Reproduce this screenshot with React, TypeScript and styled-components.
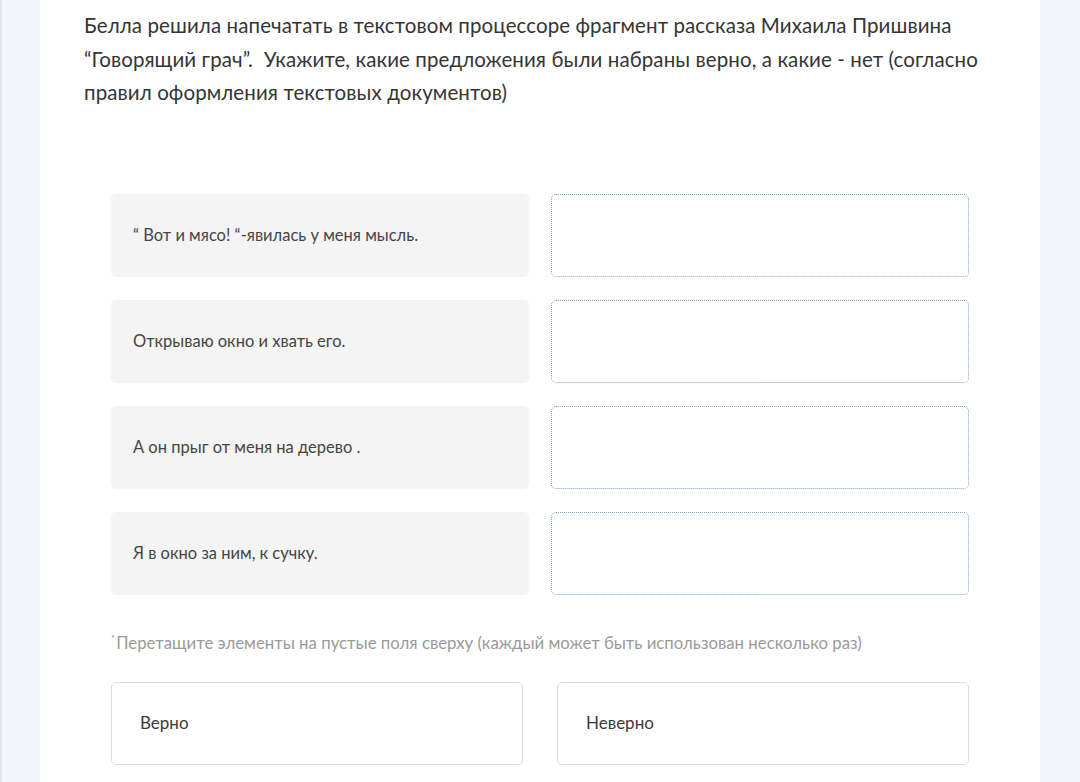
import React from "react";
import styled, { createGlobalStyle } from "styled-components";

const Global = createGlobalStyle`
  html, body { margin: 0; padding: 0; background: #f4f5fa; }
  body { font-family: Lato, "Noto Sans", sans-serif; }
  #root { min-height: 782px; }
`;

const Page = styled.div`
  display: flex;
  justify-content: center;
  height: 782px;
  overflow: hidden;
  background: #f4f5fa;
  border-left: 2px solid #e2e4ec;
  box-sizing: border-box;
`;

const Panel = styled.main`
  width: 1000px;
  margin-left: 38px;
  margin-right: 40px;
  background: #ffffff;
  box-sizing: border-box;
  padding: 9px 44px 0 44px;
`;

const Question = styled.p`
  margin: 0;
  font-size: 20.5px;
  line-height: 33.5px;
  color: #353535;
  letter-spacing: 0.1px;
`;

const Rows = styled.div`
  display: flex;
  flex-direction: column;
  gap: 23px;
  margin: 84px 0 0 27px;
  width: 858px;
`;

const Row = styled.div`
  display: grid;
  grid-template-columns: 418px 418px;
  column-gap: 22px;
  height: 83px;
`;

const Sentence = styled.div`
  display: flex;
  align-items: center;
  padding: 0 22px;
  background: #f4f4f4;
  border-radius: 5px;
  font-size: 16.5px;
  color: #454545;
`;

const Drop = styled.div`
  border: 1.5px dotted #84a4c4;
  border-radius: 5px;
  box-sizing: border-box;
`;

const Hint = styled.div`
  margin: 37px 0 0 27px;
  font-size: 16.8px;
  color: #9a9a9a;
  display: flex;
  align-items: flex-start;
`;

const Star = styled.span`
  font-size: 10px;
  line-height: 12px;
  margin-right: 1px;
`;

const Options = styled.div`
  display: grid;
  grid-template-columns: 412px 412px;
  column-gap: 34px;
  margin: 29px 0 0 27px;
`;

const Option = styled.div`
  height: 83px;
  box-sizing: border-box;
  border: 1.5px solid #dcdcdc;
  border-radius: 5px;
  display: flex;
  align-items: center;
  padding: 0 0 2px 28px;
  font-size: 17px;
  color: #3a3a3a;
`;

const sentences = [
  "“ Вот и мясо! “-явилась у меня мысль.",
  "Открываю окно и хвать его.",
  "А он прыг от меня на дерево .",
  "Я в окно за ним, к сучку.",
];

export default function App() {
  return (
    <>
      <Global />
      <Page>
        <Panel>
          <Question>
            Белла решила напечатать в текстовом процессоре фрагмент рассказа Михаила Пришвина
            <br />
            “Говорящий грач”.&nbsp; Укажите, какие предложения были набраны верно, а какие - нет (согласно
            <br />
            правил оформления текстовых документов)
          </Question>
          <Rows>
            {sentences.map((s) => (
              <Row key={s}>
                <Sentence>{s}</Sentence>
                <Drop />
              </Row>
            ))}
          </Rows>
          <Hint>
            <Star>*</Star>
            Перетащите элементы на пустые поля сверху (каждый может быть использован несколько раз)
          </Hint>
          <Options>
            <Option>Верно</Option>
            <Option>Неверно</Option>
          </Options>
        </Panel>
      </Page>
    </>
  );
}
